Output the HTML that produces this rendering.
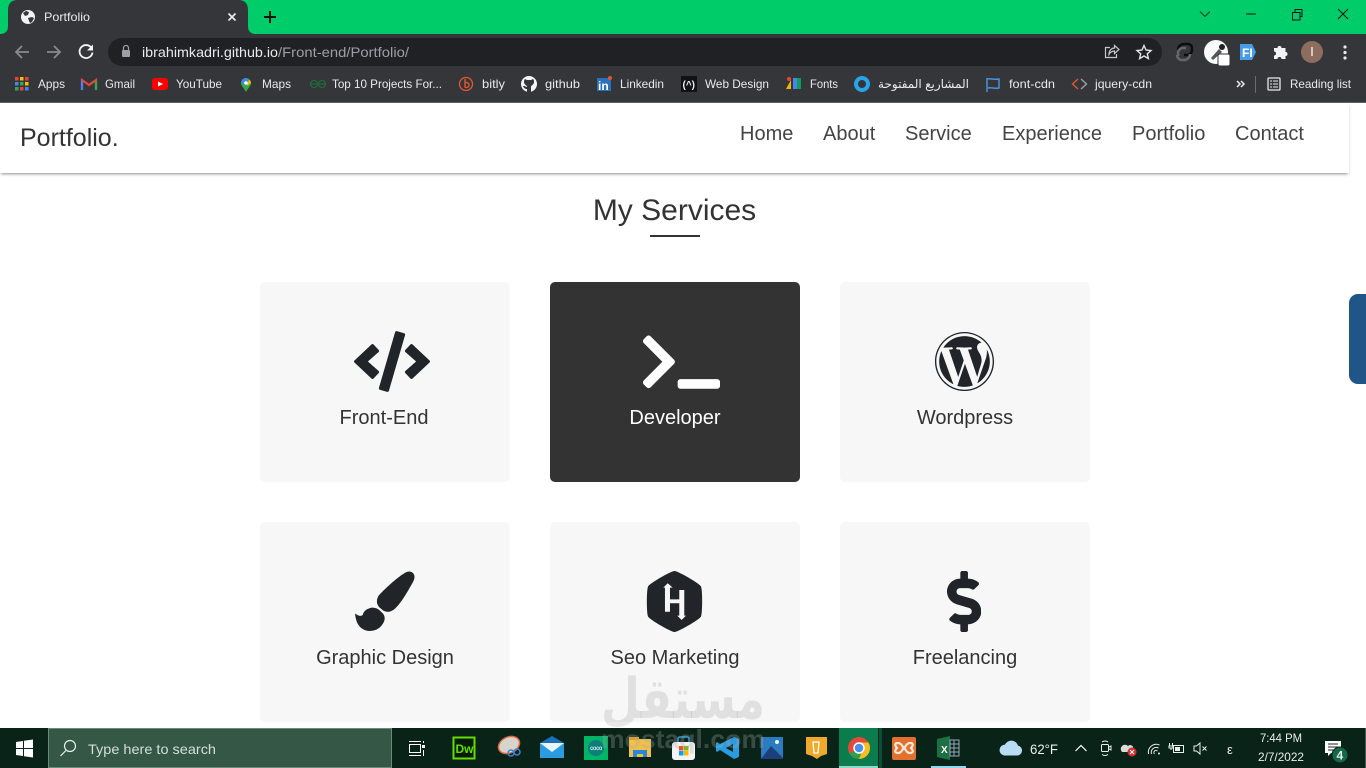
<!DOCTYPE html>
<html lang="en"><head><meta charset="utf-8"><title>Portfolio</title>
<style>
*{box-sizing:border-box}
html,body{margin:0;width:1366px;height:768px;overflow:hidden;background:#fff;font-family:"Liberation Sans",sans-serif;color:#333}
svg{position:absolute;display:block}
svg text{font-family:"Liberation Sans","DejaVu Sans",sans-serif}
header{position:absolute;left:0;top:103px;width:1349px;height:70px;background:#fff;box-shadow:0 2px 3px -1px rgba(0,0,0,.45)}
.logo{position:absolute;left:20px;top:20px;font-size:25px;line-height:30px}
nav a{position:absolute;top:19px;font-size:20px;line-height:24px;color:#444}
h2{position:absolute;left:0;width:1349px;margin:0;top:193px;text-align:center;font-weight:400;font-size:30px;line-height:36px;color:#333}
.rule{position:absolute;left:650px;top:235px;width:50px;height:2px;background:#333}
.card{position:absolute;width:250px;height:200px;background:#f7f7f7;border-radius:5px;text-align:center;color:#333;font-size:20px;line-height:24px;padding-top:124px}
.dark{background:#333;color:#fff}
.card svg{fill:#212529}
.dark svg{fill:#fff}
.thumb{position:absolute;left:1349px;top:294px;width:17px;height:90px;background:#1f5687;border-radius:9px 0 0 9px}
.wm{position:absolute;left:0;top:0;width:1366px;height:768px;pointer-events:none}
</style></head><body>

<!-- browser chrome -->
<svg style="left:0;top:0" width="1366" height="103" viewBox="0 0 1366 103">
<rect width="1366" height="34" fill="#00cc6a"/>
<rect y="34" width="1366" height="68" fill="#35363a"/>
<rect y="102" width="1366" height="1" fill="#5f6064"/>
<path d="M0 34Q8 34 8 26V10Q8 0 18 0H238Q248 0 248 10V26Q248 34 256 34Z" fill="#35363a"/>
<circle cx="28" cy="17" r="7" fill="#f1f3f4"/>
<path d="M23 13l3-2 3 1-1 3-3 1zM28 18l4-1 2 1-2 4-2 1-1-2z" fill="#35363a"/>
<text x="44" y="21" font-size="12" fill="#e8eaed" textLength="46" lengthAdjust="spacingAndGlyphs">Portfolio</text>
<path d="M228.500 13.500l7 7m0-7l-7 7" stroke="#e8eaed" stroke-width="1.700" fill="none"/>
<path d="M270 11v12M264 17h12" stroke="#111" stroke-width="2" fill="none"/>
<path d="M1200 11.500l5 5 5-5" stroke="#0a3d25" fill="none"/>
<path d="M1246 14h10" stroke="#111" stroke-width="1"/>
<rect x="1292.500" y="12.500" width="7.500" height="7.500" fill="none" stroke="#111"/>
<path d="M1295 12.500v-3h7v7h-2" fill="none" stroke="#111"/>
<path d="M1338 9l10 10m0-10l-10 10" stroke="#111" fill="none"/>
<!-- nav -->
<path d="M29 52H16m6-6l-6 6 6 6" stroke="#8a8b8e" stroke-width="1.800" fill="none"/>
<path d="M47 52h13m-6-6l6 6-6 6" stroke="#8a8b8e" stroke-width="1.800" fill="none"/>
<path d="M91.500 48a6.500 6.500 0 1 0 1 4.500" stroke="#f1f3f4" stroke-width="1.800" fill="none"/>
<path d="M93 44.500v6h-6z" fill="#f1f3f4"/>
<rect x="108" y="38" width="1054" height="28" rx="14" fill="#202124"/>
<rect x="122" y="50" width="8" height="7" rx="1" fill="#9aa0a6"/>
<path d="M123.500 50v-2a2.500 2.500 0 0 1 5 0v2" stroke="#9aa0a6" stroke-width="1.200" fill="none"/>
<text x="142" y="57" font-size="14" fill="#e8eaed" textLength="136" lengthAdjust="spacingAndGlyphs">ibrahimkadri.github.io</text>
<text x="278" y="57" font-size="14" fill="#9aa0a6" textLength="131" lengthAdjust="spacingAndGlyphs">/Front-end/Portfolio/</text>
<path d="M1110 47.500h-4.500v10h11v-3.500" stroke="#c4c7c9" stroke-width="1.200" fill="none"/>
<path d="M1109 54.500c0-4.500 3-6.500 5.500-6.500v-2.500l4.500 4-4.500 4v-2.500c-2.500 0-4 .8-5.500 3.500z" stroke="#c4c7c9" stroke-width="1.200" fill="none"/>
<path d="M1144 45.500l2 4.500 5 .5-3.700 3.300 1.100 4.800-4.400-2.600-4.400 2.600 1.100-4.800-3.700-3.300 5-.5z" stroke="#e0e2e4" stroke-width="1.400" fill="none"/>
<!-- extensions -->
<path d="M1192 49v-1a4 4 0 0 0-4-4h-4a6 6 0 0 0-6 6M1192 48v2a5 5 0 0 1-5 5h-3" stroke="#0c0d0e" stroke-width="2.500" fill="none"/>
<path d="M1177 55a5 5 0 0 0 5 5h2a6 6 0 0 0 6-6M1178 56v-3a5 5 0 0 1 5-5h3" stroke="#62686a" stroke-width="2.500" fill="none"/>
<circle cx="1216" cy="52" r="12" fill="#fafafa"/>
<path d="M1211 58l8-9 3 3-9 8z" fill="#555"/><circle cx="1222" cy="47" r="3" fill="#222"/>
<rect x="1218" y="54" width="12" height="12" rx="2" fill="#fff" stroke="#35363a"/>
<path d="M1240 44h12l4 8-4 8h-12z" fill="#4a9be8"/>
<text x="1242" y="57" font-size="12" font-weight="700" fill="#fff">FI</text>
<path d="M1274 48h3.500a2 2 0 0 1 4 0h4v4a2 2 0 0 1 0 4v3h-4a2 2 0 0 0-4 0h-3.500v-3.500a2 2 0 0 0 0-4z" fill="#f1f3f4"/>
<circle cx="1312" cy="52" r="11" fill="#8d6e5e"/>
<rect x="1311.300" y="47" width="1.400" height="9" fill="#eee"/>
<circle cx="1345" cy="47" r="1.600" fill="#e8eaed"/><circle cx="1345" cy="52.500" r="1.600" fill="#e8eaed"/><circle cx="1345" cy="58" r="1.600" fill="#e8eaed"/>
<!-- bookmarks -->
<g font-size="12" fill="#e8eaed">
<text x="38" y="88" textLength="27" lengthAdjust="spacingAndGlyphs">Apps</text>
<text x="105" y="88" textLength="30" lengthAdjust="spacingAndGlyphs">Gmail</text>
<text x="176" y="88" textLength="46" lengthAdjust="spacingAndGlyphs">YouTube</text>
<text x="262" y="88" textLength="29" lengthAdjust="spacingAndGlyphs">Maps</text>
<text x="332" y="88" textLength="110" lengthAdjust="spacingAndGlyphs">Top 10 Projects For...</text>
<text x="482" y="88" textLength="23" lengthAdjust="spacingAndGlyphs">bitly</text>
<text x="545" y="88" textLength="35" lengthAdjust="spacingAndGlyphs">github</text>
<text x="620" y="88" textLength="44" lengthAdjust="spacingAndGlyphs">Linkedin</text>
<text x="705" y="88" textLength="64" lengthAdjust="spacingAndGlyphs">Web Design</text>
<text x="810" y="88" textLength="28" lengthAdjust="spacingAndGlyphs">Fonts</text>
<text x="969" y="88" textLength="91" lengthAdjust="spacingAndGlyphs" direction="rtl">المشاريع المفتوحة</text>
<text x="1009" y="88" textLength="46" lengthAdjust="spacingAndGlyphs">font-cdn</text>
<text x="1095" y="88" textLength="57" lengthAdjust="spacingAndGlyphs">jquery-cdn</text>
<text x="1290" y="88" textLength="61" lengthAdjust="spacingAndGlyphs">Reading list</text>
</g>
<!-- apps grid -->
<g>
<rect x="15" y="77" width="3.500" height="3.500" fill="#ea4335"/><rect x="20" y="77" width="3.500" height="3.500" fill="#fbbc05"/><rect x="25" y="77" width="3.500" height="3.500" fill="#ea4335"/>
<rect x="15" y="82" width="3.500" height="3.500" fill="#4285f4"/><rect x="20" y="82" width="3.500" height="3.500" fill="#34a853"/><rect x="25" y="82" width="3.500" height="3.500" fill="#fbbc05"/>
<rect x="15" y="87" width="3.500" height="3.500" fill="#34a853"/><rect x="20" y="87" width="3.500" height="3.500" fill="#ea4335"/><rect x="25" y="87" width="3.500" height="3.500" fill="#4285f4"/>
</g>
<path d="M82 90V80l7 5 7-5v10" stroke="#ea4335" stroke-width="2.200" fill="none"/>
<path d="M82 90v-9" stroke="#4285f4" stroke-width="2.200"/><path d="M96 90v-9" stroke="#34a853" stroke-width="2.200"/>
<rect x="152" y="78" width="16" height="12" rx="3" fill="#f00"/><path d="M158 81.500l5 2.500-5 2.500z" fill="#fff"/>
<path d="M246 92c-2-4-5-6-5-9a5 5 0 0 1 10 0c0 3-3 5-5 9z" fill="#34a853"/>
<path d="M241 83a5 5 0 0 1 5-5l3 2-3 3z" fill="#4285f4"/><path d="M249 79.500a5 5 0 0 1 2 3.500l-4 3z" fill="#fbbc05"/><circle cx="246" cy="83" r="1.800" fill="#fff"/>
<g stroke="#1f6f3a" stroke-width="1.100" fill="none"><path d="M310 84h16"/><circle cx="314" cy="84" r="3.500"/><circle cx="322" cy="84" r="3.500"/></g>
<circle cx="466" cy="84" r="6.500" fill="none" stroke="#e4572e" stroke-width="1.300"/><path d="M465 79v8a2.500 2.500 0 1 0 0-4" fill="none" stroke="#e4572e" stroke-width="1.400"/>
<circle cx="529" cy="84" r="8" fill="#f5f5f5"/><path d="M527 92v-3c-2 0-3-1-4-3l2 0c1 1 1 1 2 1 0-2-3-2-3-5 0-1 0-2 1-3l2 1h4l2-1c1 1 1 2 1 3 0 3-3 3-3 5v5z" fill="#35363a"/>
<rect x="597" y="78" width="14" height="13" fill="#2a70b8"/><text x="598" y="90" font-size="12" font-weight="700" fill="#fff">in</text><circle cx="610" cy="78" r="2" fill="#e4572e"/>
<rect x="681" y="76" width="16" height="16" fill="#0f1216"/><text x="682.500" y="88" font-size="10" fill="#eee" font-weight="700">(^)</text>
<path d="M786 89l5-9v9z" fill="#f4b400"/><circle cx="789" cy="79" r="2" fill="#ea4335"/><rect x="793" y="78" width="4" height="11" fill="#4285f4"/><rect x="797" y="78" width="4" height="11" fill="#0f9d58"/>
<circle cx="862" cy="84" r="6" fill="none" stroke="#29a3ea" stroke-width="4"/>
<path d="M987 78v14" stroke="#4a90d9" stroke-width="1.500"/><path d="M987 79c4-1 6 1 12 0v9c-5 1-7-1-11 0" fill="none" stroke="#4a90d9" stroke-width="1.500"/>
<path d="M1078 79l-5.500 5 5.500 5" stroke="#e4572e" stroke-width="1.400" fill="none"/><path d="M1081 79l5.500 5-5.500 5" stroke="#9aa0a6" stroke-width="1.400" fill="none"/>
<path d="M1237 81l3 3-3 3M1241 81l3 3-3 3" stroke="#e8eaed" stroke-width="1.500" fill="none"/>
<rect x="1255" y="76" width="1" height="17" fill="#6a6c70"/>
<rect x="1268" y="78" width="12" height="12" rx="1" fill="none" stroke="#e8eaed" stroke-width="1.300"/>
<path d="M1270 81h2m1 0h5m-8 3h2m1 0h5m-8 3h2m1 0h5" stroke="#e8eaed"/>
</svg>

<!-- page -->
<header>
<div class="logo">Portfolio.</div>
<nav>
<a style="left:740px">Home</a><a style="left:823px">About</a><a style="left:905px">Service</a><a style="left:1002px">Experience</a><a style="left:1132px">Portfolio</a><a style="left:1235px">Contact</a>
</nav>
</header>
<h2>My Services</h2>
<div class="rule"></div>

<div class="card" style="left:260px;top:282px">
<svg style="left:94px;top:49px" width="76" height="61" viewBox="0 0 640 512"><path d="M278.900 511.500l-61-17.700c-6.400-1.800-10-8.500-8.200-14.900L346.200 8.700c1.800-6.400 8.500-10 14.900-8.200l61 17.700c6.400 1.800 10 8.500 8.200 14.900L293.800 503.300c-1.900 6.400-8.500 10.100-14.900 8.200zm-114-112.200l43.500-46.400c4.600-4.900 4.300-12.700-.8-17.200L117 256l90.600-79.700c5.100-4.500 5.500-12.300.8-17.200l-43.500-46.400c-4.500-4.800-12.100-5.100-17-.5L3.800 247.200c-5.100 4.700-5.100 12.800 0 17.500l144.100 135.100c4.900 4.600 12.500 4.400 17-.5zm327.200.6l144.100-135.100c5.100-4.700 5.100-12.800 0-17.500L492.100 112.100c-4.800-4.500-12.400-4.300-17 .5L431.600 159c-4.600 4.900-4.300 12.700.8 17.200L523 256l-90.600 79.700c-5.100 4.500-5.500 12.300-.8 17.200l43.500 46.400c4.500 4.900 12.100 5.100 17 .6z"/></svg>
<span style="position:relative;left:-1px">Front-End</span></div>

<div class="card dark" style="left:550px;top:282px">
<svg style="left:93px;top:49px" width="77" height="61.600" viewBox="0 0 640 512"><path d="M257.981 272.971L63.638 467.314c-9.373 9.373-24.569 9.373-33.941 0L7.029 444.647c-9.357-9.357-9.375-24.522-.04-33.901L161.011 256 6.990 101.255c-9.335-9.379-9.317-24.544.04-33.901l22.667-22.667c9.373-9.373 24.569-9.373 33.941 0L257.981 239.030c9.373 9.372 9.373 24.568 0 33.941zM640 456v-32c0-13.255-10.745-24-24-24H312c-13.255 0-24 10.745-24 24v32c0 13.255 10.745 24 24 24h304c13.255 0 24-10.745 24-24z"/></svg>
Developer</div>

<div class="card" style="left:840px;top:282px">
<svg style="left:94px;top:49px" width="61" height="61" viewBox="0 0 512 512"><path d="M61.700 169.400l101.500 278C92.200 413 43.300 340.200 43.300 256c0-30.900 6.600-60.100 18.400-86.600zm337.900 75.900c0-26.300-9.400-44.500-17.500-58.700-10.800-17.500-20.900-32.400-20.900-49.900 0-19.600 14.800-37.800 35.700-37.800.9 0 1.800.1 2.800.2-37.900-34.700-88.300-55.900-143.700-55.900-74.300 0-139.700 38.100-177.800 95.900 5 .2 9.700.3 13.700.3 22.200 0 56.700-2.700 56.700-2.700 11.500-.7 12.800 16.200 1.400 17.500 0 0-11.500 1.400-24.300 2l77.500 230.400L249.800 247l-33.100-90.800c-11.500-.7-22.300-2-22.300-2-11.500-.7-10.100-18.200 1.300-17.500 0 0 35.100 2.700 56 2.700 22.200 0 56.700-2.700 56.700-2.700 11.500-.7 12.800 16.200 1.400 17.500 0 0-11.500 1.300-24.300 2l76.900 228.700 21.200-70.900c9-29.400 16-50.500 16-68.700zm-139.900 29.400l-63.800 185.500c19.100 5.600 39.200 8.700 60.100 8.700 24.800 0 48.500-4.300 70.600-12.100-.6-.9-1.100-1.900-1.500-2.900l-65.400-179.200zm183-120.700c.9 6.800 1.400 14 1.400 21.900 0 21.600-4 45.800-16.200 76.200l-65 187.900C426.200 403 468.700 334.500 468.700 256c0-37-9.400-71.800-26-102.100zM504 256c0 136.800-111.300 248-248 248C119.200 504 8 392.700 8 256 8 119.200 119.200 8 256 8c136.700 0 248 111.200 248 248zm-11.400 0c0-130.500-106.200-236.600-236.600-236.600C125.500 19.400 19.400 125.500 19.400 256S125.600 492.600 256 492.600c130.500 0 236.600-106.100 236.600-236.600z"/></svg>
Wordpress</div>

<div class="card" style="left:260px;top:522px">
<svg style="left:80px;top:38px" width="90" height="80" viewBox="0 0 270 240"><path d="M196 38Q210 30 220 40Q228 50 218 68C200 100 180 135 160 150Q145 160 130 152L118 142Q105 128 115 108C135 85 175 50 196 38Z"/><path d="M45 160Q60 172 68 165Q72 148 95 143Q110 142 120 152L130 162Q137 172 132 185Q120 212 90 213Q62 213 50 185Q46 172 45 160Z"/></svg>
Graphic Design</div>

<div class="card" style="left:550px;top:522px">
<svg style="left:94px;top:49px" width="61" height="61" viewBox="0 0 512 512"><path fill-rule="evenodd" d="M477.500 128C463 103.050 285.130 0 256.160 0S49.250 102.790 34.840 128s-14.490 230.800 0 256 192.380 128 221.320 128S463 409.080 477.490 384s14.510-231 .01-256zM199 103L241 140H218V238H296V159H338V375H352L316 411L279 375H296V271H218V342H176V140H162Z"/></svg>
Seo Marketing</div>

<div class="card" style="left:840px;top:522px">
<svg style="left:107px;top:49px" width="34.300" height="61" viewBox="0 0 288 512"><path d="M209.200 233.400l-108-31.600C88.700 198.200 80 186.500 80 173.500c0-16.300 13.200-29.500 29.500-29.500h66.300c12.200 0 24.200 3.700 34.200 10.500 6.100 4.100 14.300 3.100 19.500-2l34.800-34c7.100-6.900 6.100-18.400-1.800-24.500C238 74.800 207.400 64.100 176 64V16c0-8.800-7.200-16-16-16h-32c-8.800 0-16 7.200-16 16v48h-2.500C45.800 64-5.400 118.700.5 183.600c4.200 46.100 39.400 83.600 83.800 96.600l102.500 30c12.500 3.700 21.200 15.300 21.200 28.300 0 16.300-13.200 29.500-29.500 29.500h-66.300C100 368 88 364.300 78 357.500c-6.100-4.100-14.300-3.100-19.500 2l-34.800 34c-7.100 6.900-6.100 18.400 1.800 24.500 24.500 19.200 55.100 29.900 86.500 30v48c0 8.800 7.200 16 16 16h32c8.800 0 16-7.200 16-16v-48.200c46.600-.9 90.300-28.600 105.700-72.700 21.500-61.600-14.600-124.800-72.500-141.700z"/></svg>
Freelancing</div>

<div class="thumb"></div>

<!-- taskbar -->
<svg style="left:0;top:728px" width="1366" height="40" viewBox="0 728 1366 40">
<rect y="728" width="1366" height="40" fill="#0a2318"/>
<path d="M16 742l7-1v7h-7zM24 740.800l9-1.300v8.500h-9zM16 749h7v7l-7-1zM24 749h9v8.500l-9-1.300z" fill="#fff"/>
<rect x="48.500" y="728.500" width="343" height="39" fill="#345845" stroke="#6b8a7b"/>
<circle cx="70" cy="746" r="5.500" fill="none" stroke="#e8eeea" stroke-width="1.200"/><path d="M66 750.500l-5.500 5.500" stroke="#e8eeea" stroke-width="1.200"/>
<text x="88" y="754" font-size="14" fill="#d5dfda" textLength="128" lengthAdjust="spacingAndGlyphs">Type here to search</text>
<!-- task view -->
<g stroke="#fff" fill="none"><rect x="409.500" y="744.500" width="11" height="8"/><path d="M409 741.500h12M409 755.500h12M423.500 741v2M423.500 750v6"/></g><rect x="422" y="745" width="3" height="3" fill="#fff"/>
<!-- Dw -->
<rect x="453.500" y="737.500" width="21" height="21" fill="#071a05" stroke="#5fe000" stroke-width="2"/>
<text x="455.500" y="753" font-size="12" fill="#5fe000" font-weight="700">Dw</text>
<!-- snipping -->
<ellipse cx="509" cy="745" rx="11" ry="8" transform="rotate(-25 509 745)" fill="#d8d4cc" stroke="#d96a3a" stroke-width="1.500"/>
<circle cx="511" cy="753" r="3" fill="none" stroke="#3b82d8" stroke-width="1.500"/><circle cx="517" cy="752" r="3" fill="none" stroke="#3b82d8" stroke-width="1.500"/>
<!-- mail -->
<path d="M540 743l12-7 12 7z" fill="#1b6fb8"/><rect x="540" y="743" width="24" height="15" fill="#2a9be0"/><path d="M540 743h24l-12 9z" fill="#e8f4fb"/>
<!-- arduino -->
<rect x="584" y="736" width="24" height="24" fill="#00b468"/><circle cx="596" cy="748" r="8" fill="#0d7f78"/><text x="590" y="751" font-size="9" fill="#fff">∞</text><text x="596" y="751" font-size="9" fill="#fff">∞</text>
<!-- explorer -->
<rect x="629" y="739" width="22" height="18" fill="#f0c04a"/><rect x="629" y="737" width="10" height="3" fill="#d9a02c"/><path d="M633 757v-7h14v7h-4v-3h-6v3z" fill="#2b88d8"/>
<!-- store -->
<rect x="672" y="742" width="23" height="18" rx="3" fill="#f4f4f4"/><path d="M678 742v-3q0-2 2-2h7q2 0 2 2v3" fill="none" stroke="#2a9be0" stroke-width="1.500"/>
<rect x="679" y="746" width="4.500" height="4.500" fill="#f25022"/><rect x="684" y="746" width="4.500" height="4.500" fill="#7fba00"/><rect x="679" y="751" width="4.500" height="4.500" fill="#00a4ef"/><rect x="684" y="751" width="4.500" height="4.500" fill="#ffb900"/>
<!-- vscode -->
<path d="M734 737l5 2v18l-5 2-14-9-3 2-1-1v-8l1-1 3 2zm-1 7l-7 4 7 4z" fill="#2a9be0"/>
<!-- photos -->
<rect x="761" y="737" width="22" height="22" fill="#2a7bc0"/><path d="M761 759l10-13 12 12v1z" fill="#1d3f7a"/><circle cx="777" cy="742" r="2" fill="#e8f4fb"/>
<!-- sublime-like -->
<path d="M806 737h21v17l-6 2-4 3-5-3-6-2z" fill="#f0a92a"/><path d="M813 742h6l-1 11h-4z" fill="none" stroke="#fff" stroke-width="1.300"/>
<!-- chrome -->
<rect x="839" y="728" width="39" height="40" fill="#0a7c4e"/><rect x="839" y="766" width="39" height="2" fill="#8ed6c5"/><rect x="879" y="728" width="3" height="40" fill="#0a5038"/>
<circle cx="859" cy="748" r="11" fill="#e6483a"/><path d="M849.500 753.500a11 11 0 0 0 9.500 5.500l5-8-10 0z" fill="#2f9e4f"/><path d="M859 759a11 11 0 0 0 9.500-16.500l-9.500 0 4 7z" fill="#f4bf1f"/><circle cx="859" cy="748" r="5" fill="#4a90e8" stroke="#fff" stroke-width="1.500"/>
<!-- xampp -->
<rect x="892" y="737" width="24" height="23" rx="2" fill="#e2702e"/><path d="M898 743c4 0 4 4 6 5-2 1-2 5-6 5s-3-3-1-5c-2-2-3-5 1-5zM910 743c-4 0-4 4-6 5 2 1 2 5 6 5s3-3 1-5c2-2 3-5-1-5z" fill="none" stroke="#fbe8d8" stroke-width="2.200"/>
<!-- excel -->
<path d="M937 739l13-3v24l-13-3z" fill="#1d7044"/><rect x="950" y="740" width="9" height="16" fill="none" stroke="#9ab" stroke-width="1"/><path d="M950 744h9M950 748h9M950 752h9M954 740v16" stroke="#9ab"/>
<text x="941" y="753" font-size="10" font-weight="700" fill="#fff">X</text>
<rect x="931" y="766" width="35" height="2" fill="#8fd8f0"/>
<!-- weather -->
<path d="M1004 755.500h13a5 5 0 0 0 1-9.900 7 7 0 0 0-13-1 5.500 5.500 0 0 0-1 10.900z" fill="#b9dcf5"/>
<text x="1030" y="754" font-size="14" fill="#e8eeea" textLength="28" lengthAdjust="spacingAndGlyphs">62°F</text>
<path d="M1075.500 751l5.500-5.500 5.500 5.500" fill="none" stroke="#fff" stroke-width="1.200"/>
<rect x="1101.500" y="744.500" width="7" height="7" rx="1" fill="none" stroke="#e8eeea"/><path d="M1109 747l2-1v4l-2-1M1102 742q3-2 6 0M1102 754.500q3 2 6 0" fill="none" stroke="#e8eeea"/>
<path d="M1122 752h11v-3a3 3 0 0 0-5-3 3.500 3.500 0 0 0-6 6z" fill="#d8dcda"/><circle cx="1132" cy="752" r="4.500" fill="#d03030"/><path d="M1130 750l4 4m0-4l-4 4" stroke="#fff"/>
<g fill="none" stroke="#e8eeea"><path d="M1148.500 754a8 8 0 0 1 11-9M1151.500 754a5 5 0 0 1 7-6M1154.500 754a2 2 0 0 1 3-3"/></g><circle cx="1159" cy="753.500" r="1" fill="#e8eeea"/>
<rect x="1173.500" y="745.500" width="10" height="7" fill="none" stroke="#e8eeea"/><rect x="1175" y="747" width="5" height="4" fill="#e8eeea"/><path d="M1169.500 743v3M1172.500 743v3M1169 746h4v2h-4zM1171 748v2" stroke="#e8eeea" fill="none"/>
<path d="M1194 746h2.500l3.500-3v11l-3.500-3H1194zM1202.500 746.500l4 4m0-4l-4 4" fill="none" stroke="#e8eeea"/>
<text x="1227" y="754" font-size="13" fill="#e8eeea">ε</text>
<text x="1260" y="742" font-size="12" fill="#e8eeea" textLength="42" lengthAdjust="spacingAndGlyphs">7:44 PM</text>
<text x="1258" y="761" font-size="12" fill="#e8eeea" textLength="46" lengthAdjust="spacingAndGlyphs">2/7/2022</text>
<path d="M1325 741h16v12h-10l-3 3v-3h-3z" fill="#fff"/><path d="M1328 744h10M1328 747h10M1328 750h6" stroke="#222"/>
<circle cx="1340" cy="755" r="8" fill="#14694a" stroke="#0a2318"/><text x="1336.500" y="759.500" font-size="12" font-weight="700" fill="#e8eeea">4</text>
<rect x="1365" y="728" width="1" height="40" fill="#4a5a52"/>
</svg>

<!-- watermark -->
<svg class="wm" width="1366" height="768" viewBox="0 0 1366 768">
<text x="683" y="718" text-anchor="middle" font-size="56" font-weight="700" fill="#000" fill-opacity=".09" textLength="164" lengthAdjust="spacingAndGlyphs" style="font-family:'DejaVu Sans',sans-serif">مستقل</text>
<text x="601" y="748" font-size="26" font-weight="700" fill="#aaa" fill-opacity=".3" textLength="164" lengthAdjust="spacingAndGlyphs" style="font-family:'Liberation Sans',sans-serif">mostaql.com</text>
</svg>
</body></html>
